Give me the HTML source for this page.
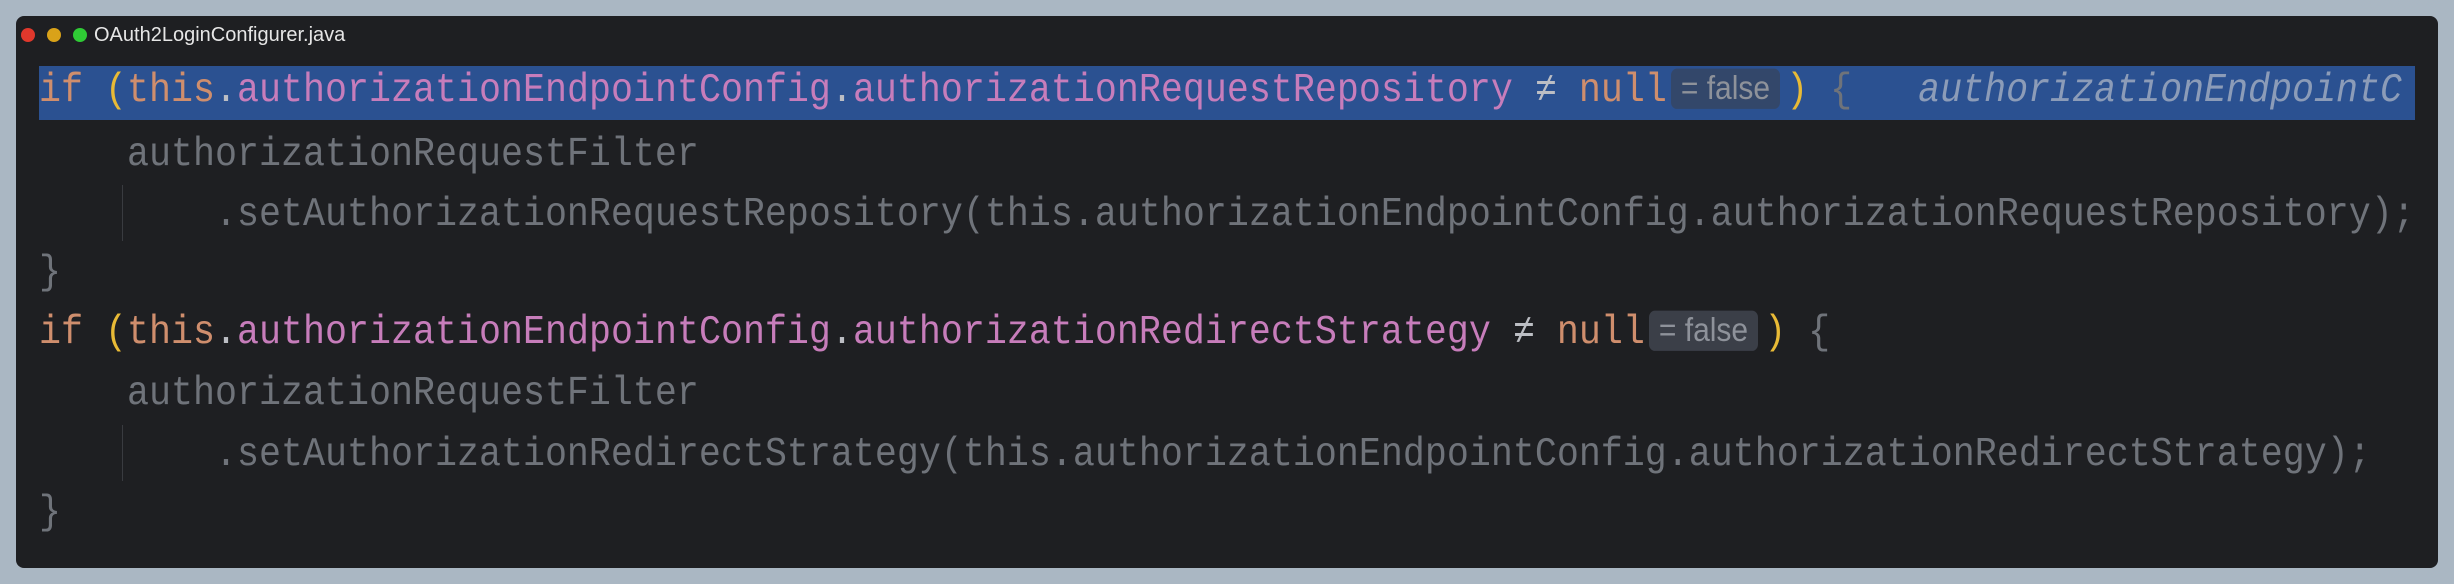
<!DOCTYPE html>
<html><head><meta charset="utf-8"><style>
body{margin:0;width:2454px;height:584px;background:#aab7c3;overflow:hidden;position:relative}
.win{position:absolute;left:16px;top:16px;width:2422px;height:552px;background:#1e1f22;border-radius:8px}
.dot{position:absolute;top:28px;width:14px;height:14px;border-radius:50%}
.title{position:absolute;left:94px;top:24px;font:20px "Liberation Sans",sans-serif;color:#e6e6e6}
.sel{position:absolute;left:39px;top:66px;width:2376px;height:54px;background:#2b5191}
.l{position:absolute;left:39px;font:36.67px/60px "Liberation Mono",monospace;white-space:pre;color:#6f737a;transform:scaleY(1.12);transform-origin:0 50%}
.k{color:#cf8e6d}.f{color:#c77dbb}.p{color:#e8ba36}.w{color:#bcbec4}.g{color:#6f737a}
.i{font-style:italic;color:#8c9cb8}
.inl{display:inline-block;background:#3b3f48;color:#8e929a;font:30px/36px "Liberation Sans",sans-serif;padding:0 10px;border-radius:6px;margin:0 6px 0 4px;vertical-align:2px}
.guide{position:absolute;left:122px;width:1px;background:#393b40}
</style></head><body>
<div class="win"></div>
<div class="dot" style="left:21px;background:#e0382c"></div>
<div class="dot" style="left:47px;background:#d9a219"></div>
<div class="dot" style="left:73px;background:#2fcb35"></div>
<div class="title">OAuth2LoginConfigurer.java</div>
<div class="sel"></div>
<div class="guide" style="top:185px;height:56px"></div>
<div class="guide" style="top:425px;height:56px"></div>
<div class="l" style="top:61px"><span class="k">if </span><span class="p">(</span><span class="k">this</span><span class="w">.</span><span class="f">authorizationEndpointConfig</span><span class="w">.</span><span class="f">authorizationRequestRepository</span><span class="w"> ≠ </span><span class="k">null</span><span class="inl" style="background:#33476a">= false</span><span class="p">)</span> <span class="g">{</span>   <span class="i">authorizationEndpointC</span></div>
<div class="l" style="top:125px">    authorizationRequestFilter</div>
<div class="l" style="top:185px">        .setAuthorizationRequestRepository(this.authorizationEndpointConfig.authorizationRequestRepository);</div>
<div class="l" style="top:243px">}</div>
<div class="l" style="top:303px"><span class="k">if </span><span class="p">(</span><span class="k">this</span><span class="w">.</span><span class="f">authorizationEndpointConfig</span><span class="w">.</span><span class="f">authorizationRedirectStrategy</span><span class="w"> ≠ </span><span class="k">null</span><span class="inl">= false</span><span class="p">)</span> <span class="g">{</span></div>
<div class="l" style="top:364px">    authorizationRequestFilter</div>
<div class="l" style="top:425px">        .setAuthorizationRedirectStrategy(this.authorizationEndpointConfig.authorizationRedirectStrategy);</div>
<div class="l" style="top:483px">}</div>
</body></html>
